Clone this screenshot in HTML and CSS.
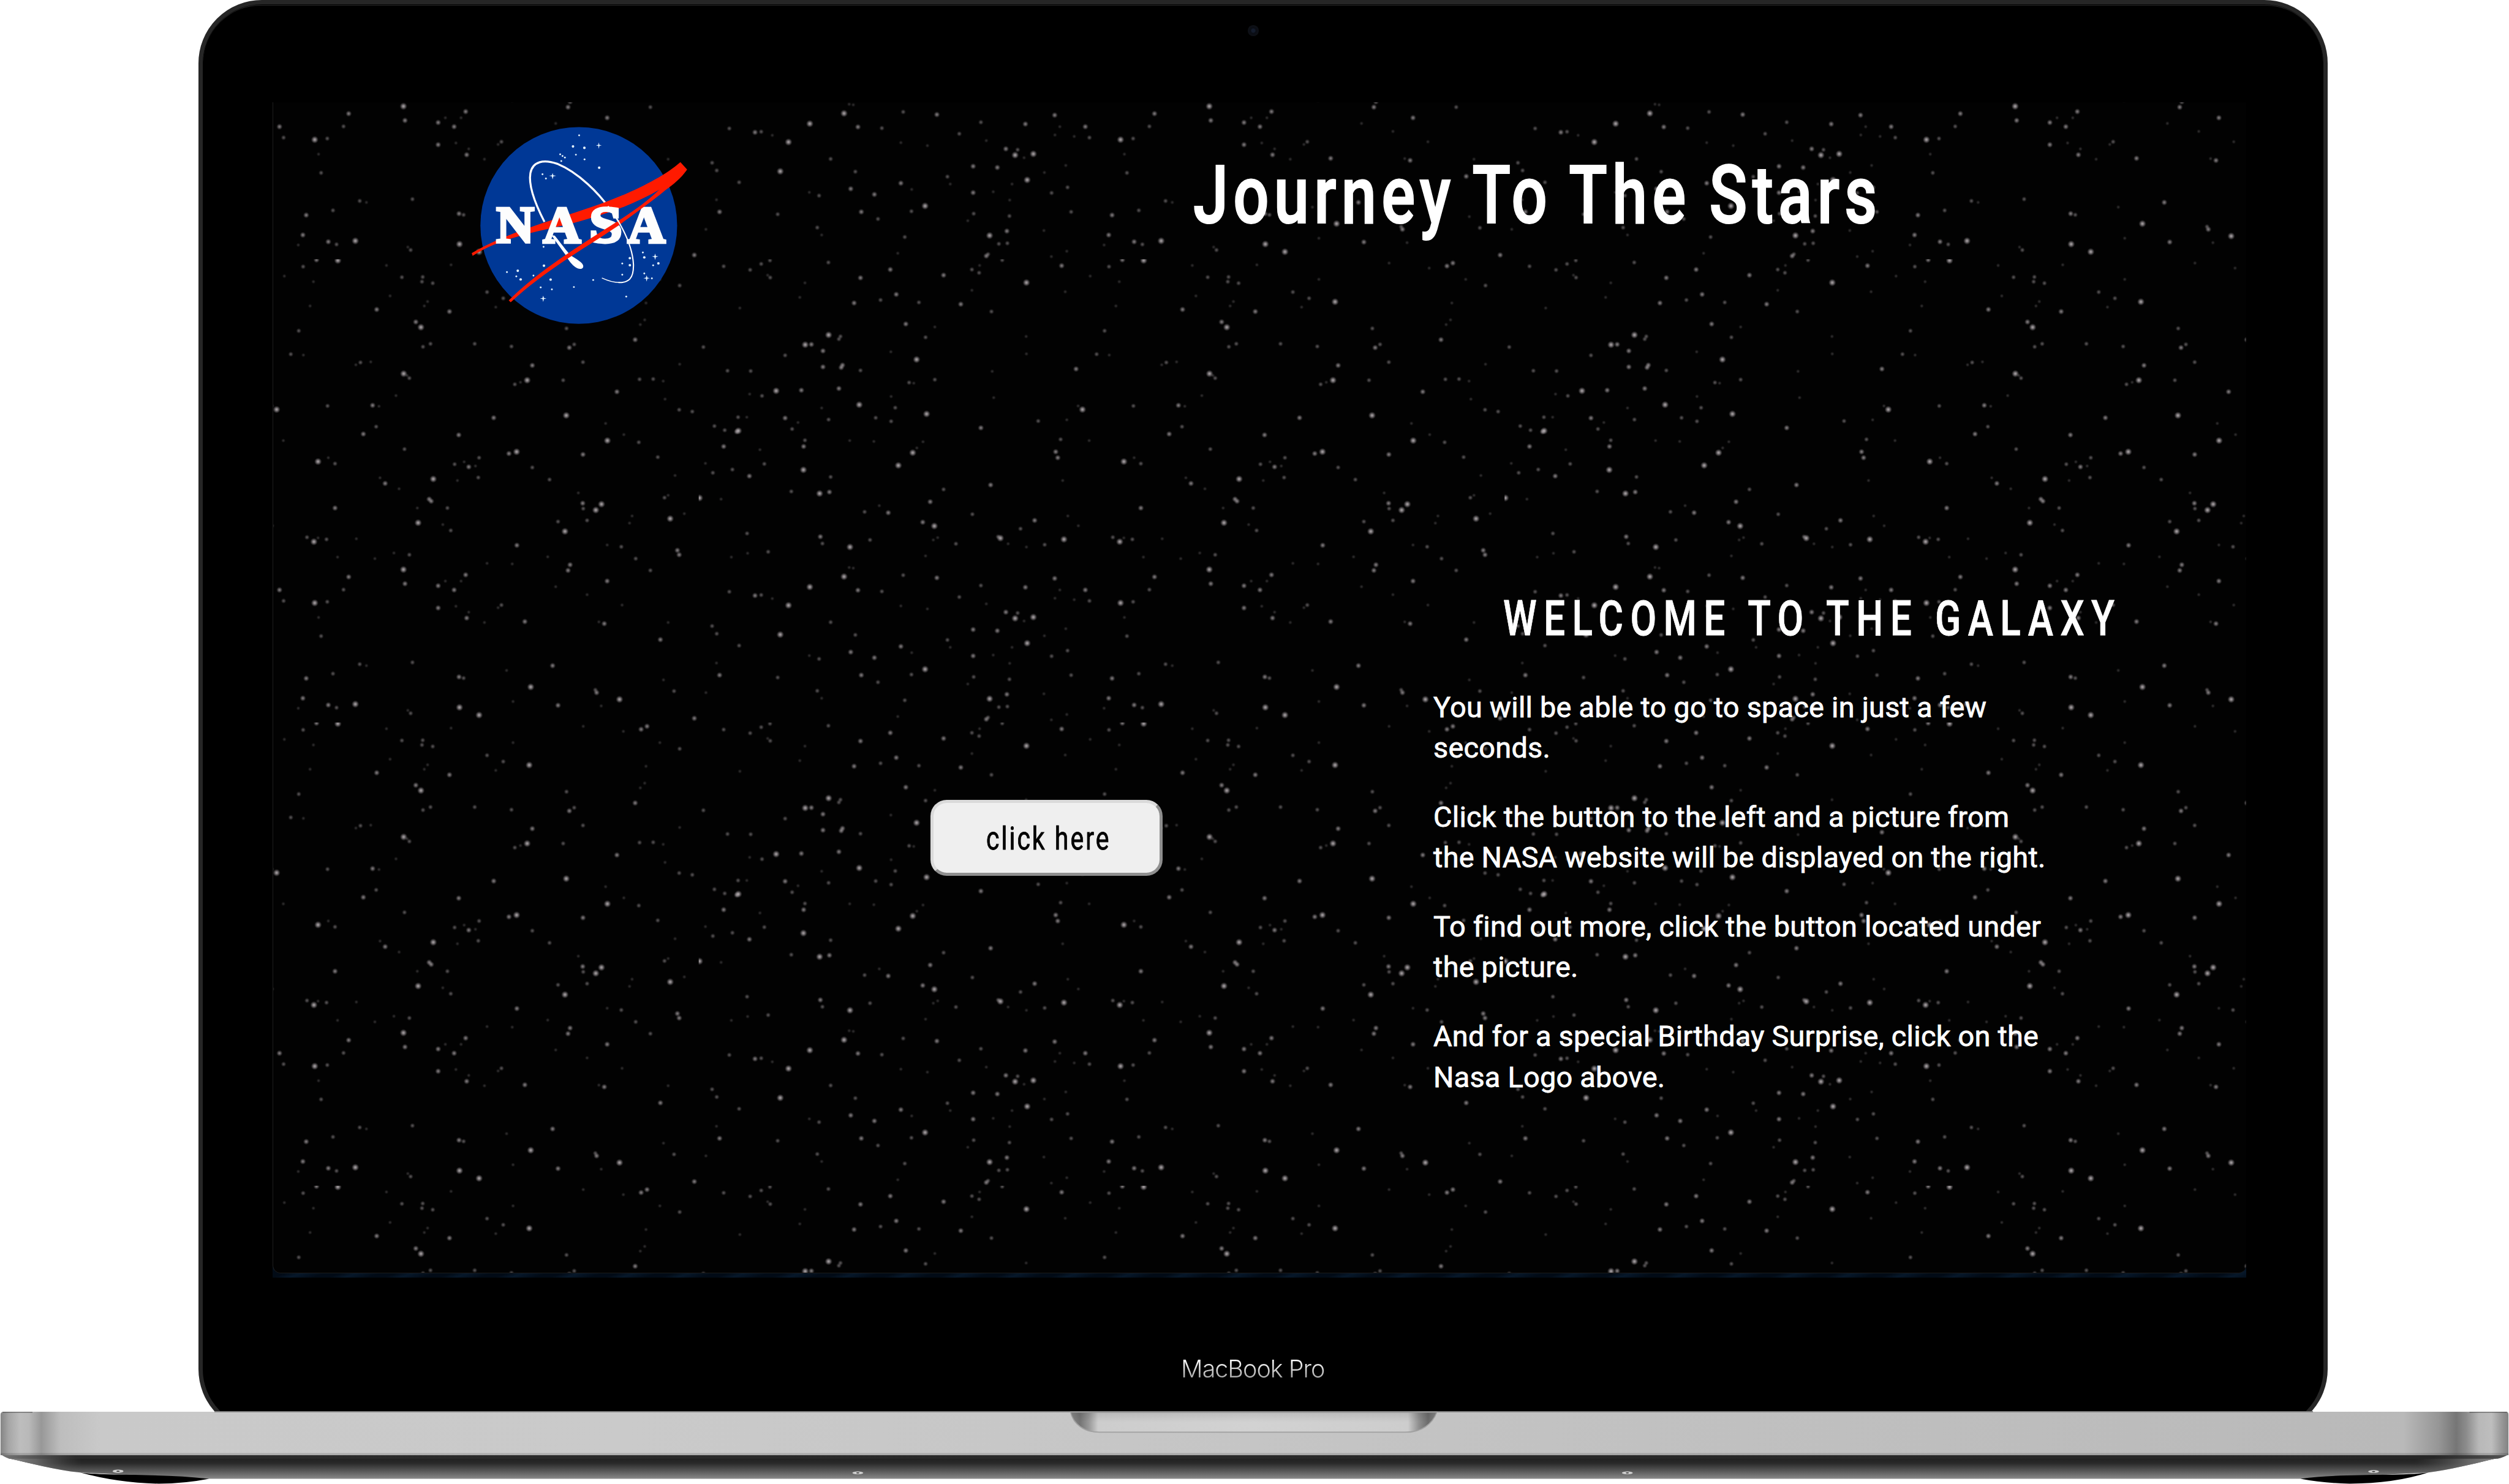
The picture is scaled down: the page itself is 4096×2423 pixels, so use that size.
FILE: index.html
```html
<!DOCTYPE html>
<html lang="en">
<head>
<meta charset="utf-8">
<title>Journey To The Stars</title>
<link rel="stylesheet" href="styles.css">
</head>
<body>
<div class="laptop">
  <div class="lid">
    <div class="bezel">
      <div class="camera"></div>
      <div class="screen">
        <svg class="sky" viewBox="0 0 3644 2163" preserveAspectRatio="none" aria-hidden="true">
          <defs>
            <radialGradient id="glow">
              <stop offset="0" stop-color="#cfc8cb"/>
              <stop offset=".35" stop-color="#b5aeb2" stop-opacity=".8"/>
              <stop offset="1" stop-color="#8a8488" stop-opacity="0"/>
            </radialGradient>
            <pattern id="stars" patternUnits="userSpaceOnUse" x="786" y="290" width="1488.5" height="856"></pattern>
          </defs>
          <rect width="3644" height="2163" fill="url(#stars)"/>
        </svg>
        <div class="page">
          <header class="header">
            <svg class="logo" viewBox="0 0 1380 1260" role="img" aria-label="NASA">
              <circle cx="685" cy="652" r="545" fill="#003896"/>
              <g class="logo-stars">
                <circle cx="687" cy="153" r="5"/><circle cx="653" cy="214" r="7"/><circle cx="716" cy="222" r="7"/>
                <circle cx="582" cy="258" r="5"/><circle cx="595" cy="267" r="5"/><circle cx="608" cy="276" r="5"/>
                <circle cx="588" cy="295" r="5"/><circle cx="669" cy="260" r="5"/><circle cx="717" cy="286" r="5"/>
                <circle cx="798" cy="332" r="7"/><circle cx="484" cy="368" r="5"/><circle cx="503" cy="392" r="5"/>
                <circle cx="490" cy="770" r="5"/><circle cx="492" cy="875" r="7"/><circle cx="287" cy="910" r="5"/>
                <circle cx="347" cy="903" r="7"/><circle cx="339" cy="934" r="5"/><circle cx="363" cy="951" r="7"/>
                <circle cx="434" cy="930" r="5"/><circle cx="529" cy="952" r="7"/><circle cx="474" cy="995" r="5"/>
                <circle cx="536" cy="1006" r="5"/><circle cx="658" cy="993" r="5"/><circle cx="765" cy="954" r="5"/>
                <circle cx="926" cy="863" r="5"/><circle cx="968" cy="833" r="7"/><circle cx="968" cy="872" r="7"/>
                <circle cx="926" cy="925" r="5"/><circle cx="1040" cy="802" r="5"/><circle cx="1048" cy="829" r="7"/>
                <circle cx="1126" cy="862" r="7"/><circle cx="1097" cy="873" r="5"/><circle cx="1048" cy="918" r="5"/>
                <circle cx="1090" cy="945" r="5"/><circle cx="948" cy="1046" r="5"/>
                <path d="M796 192l3 13 13 3-13 3-3 16-3-16-13-3 13-3z"/>
                <path d="M540 361l4 13 16 3-16 3-4 17-4-17-16-3 16-3z"/>
                <path d="M1108 808l4 13 14 3-14 3-4 16-4-16-14-3 14-3z"/>
                <path d="M1061 928l4 13 14 3-14 3-4 16-4-16-14-3 14-3z"/>
                <path d="M488 1041l4 13 14 3-14 3-4 16-4-16-14-3 14-3z"/>
              </g>
              <path class="orbit" stroke-width="11" d="M495 632C440 525 406 425 417 362C430 295 492 285 565 310C690 362 800 480 850 552"/>
              <path class="wing" d="M92 805C280 695 500 635 700 568C900 505 1130 405 1248 301L1285 342C1250 395 1200 430 1180 445L1130 455C1000 530 850 587 660 637C430 692 250 722 97 820Z"/>
              <path class="orbit-end" d="M533 706L552 708C590 755 615 790 640 818C690 848 716 866 709 884C702 898 678 894 662 880C636 857 625 838 612 815Z"/>
              <text class="logo-text" y="747"><tspan x="228">N</tspan><tspan x="487">A</tspan><tspan x="742" textLength="184" lengthAdjust="spacingAndGlyphs">S</tspan><tspan x="955">A</tspan></text>
              <path class="wing" d="M297 1067C440 925 620 805 890 635C990 572 1060 522 1130 455L1200 380L1285 342C1230 412 1120 497 905 652C700 790 500 900 308 1077Z"/>
              <path class="orbit" stroke-width="9" d="M846 546C868 572 885 596 905 630"/>
              <path class="orbit" stroke-width="7" d="M903 626C955 715 985 800 988 870C989 948 960 970 905 968"/>
              <path class="orbit" stroke-width="5" d="M910 968C875 968 845 958 813 943"/>
            </svg>
            <h1 class="title"><span>Journey To The Stars</span></h1>
          </header>
          <main class="main">
            <button class="launch" type="button"><span>click here</span></button>
            <section class="intro">
              <h2 class="welcome"><span>WELCOME TO THE GALAXY</span></h2>
              <p>You will be able to go to space in just a few<br>seconds.</p>
              <p>Click the button to the left and a picture from<br>the NASA website will be displayed on the right.</p>
              <p>To find out more, click the button located under<br>the picture.</p>
              <p>And for a special Birthday Surprise, click on the<br>Nasa Logo above.</p>
            </section>
          </main>
        </div>
      </div>
      <div class="model"><span>MacBook Pro</span></div>
    </div>
  </div>
  <svg class="base" viewBox="0 2606 4633 135" preserveAspectRatio="none" aria-hidden="true">
    <defs>
      <linearGradient id="metal" gradientUnits="userSpaceOnUse" x1="0" y1="0" x2="4633" y2="0">
        <stop offset="0" stop-color="#828282"/><stop offset=".0035" stop-color="#a6a6a6"/>
        <stop offset=".008" stop-color="#bdbdbd"/><stop offset=".0115" stop-color="#b9b9b9"/>
        <stop offset=".0165" stop-color="#989898"/><stop offset=".024" stop-color="#bdbdbd"/>
        <stop offset=".04" stop-color="#c9c9c9"/><stop offset=".25" stop-color="#cacaca"/>
        <stop offset=".5" stop-color="#c5c5c5"/><stop offset=".85" stop-color="#bcbcbc"/>
        <stop offset=".958" stop-color="#b9b9b9"/><stop offset=".972" stop-color="#969696"/>
        <stop offset=".979" stop-color="#767676"/><stop offset=".983" stop-color="#8c8c8c"/>
        <stop offset=".988" stop-color="#b8b8b8"/><stop offset=".993" stop-color="#bebebe"/>
        <stop offset=".997" stop-color="#999"/><stop offset="1" stop-color="#808080"/>
      </linearGradient>
      <linearGradient id="under" x1="0" y1="0" x2="0" y2="1">
        <stop offset="0" stop-color="#202020"/><stop offset=".25" stop-color="#2a2a2a"/>
        <stop offset=".65" stop-color="#5c5c5c"/><stop offset="1" stop-color="#8a8a8a"/>
      </linearGradient>
      <linearGradient id="edgeL" gradientUnits="userSpaceOnUse" x1="10" y1="0" x2="150" y2="0">
        <stop offset="0" stop-color="#909090"/><stop offset=".4" stop-color="#808080" stop-opacity=".7"/><stop offset="1" stop-color="#555" stop-opacity="0"/>
      </linearGradient>
      <linearGradient id="edgeR" gradientUnits="userSpaceOnUse" x1="4623" y1="0" x2="4460" y2="0">
        <stop offset="0" stop-color="#909090"/><stop offset=".4" stop-color="#808080" stop-opacity=".7"/><stop offset="1" stop-color="#555" stop-opacity="0"/>
      </linearGradient>
      <linearGradient id="strip" gradientUnits="userSpaceOnUse" x1="0" y1="0" x2="4633" y2="0">
        <stop offset="0" stop-color="#777"/><stop offset=".03" stop-color="#2b2b2b"/><stop offset=".97" stop-color="#262626"/><stop offset="1" stop-color="#555"/>
      </linearGradient>
      <linearGradient id="notch" gradientUnits="userSpaceOnUse" x1="1977" y1="0" x2="2654" y2="0">
        <stop offset="0" stop-color="#8a8a8a"/><stop offset=".025" stop-color="#747474"/><stop offset=".05" stop-color="#999"/>
        <stop offset=".075" stop-color="#cdcdcd"/><stop offset=".5" stop-color="#d2d2d2"/><stop offset=".92" stop-color="#cdcdcd"/>
        <stop offset=".95" stop-color="#8f8f8f"/><stop offset=".975" stop-color="#6c6c6c"/><stop offset="1" stop-color="#8a8a8a"/>
      </linearGradient>
      <linearGradient id="notchShade" x1="0" y1="0" x2="0" y2="1">
        <stop offset="0" stop-color="#000" stop-opacity=".1"/><stop offset=".5" stop-color="#000" stop-opacity="0"/>
      </linearGradient>
    </defs>
    <path fill="url(#under)" d="M15 2693C60 2703 100 2714 148 2719.500L383 2731H4250L4484 2719.500C4530 2713 4570 2703 4610 2693Z"/>
    <path fill="url(#edgeL)" d="M15 2693C60 2703 100 2714 148 2719.500L155 2720V2693Z"/>
    <path fill="url(#edgeR)" d="M4610 2693C4570 2703 4530 2713 4484 2719.500L4455 2721V2693Z"/>
    <path fill="url(#strip)" d="M2 2686H4632Q4624 2691 4612 2694H18Q8 2691 2 2686Z"/>
    <path fill="url(#metal)" d="M5 2607H4629Q4632 2608 4632 2613V2687.500H1V2613Q1 2608 5 2607Z"/>
    <path fill="#000" opacity=".14" d="M1 2683.500H4632V2687.500H1Z"/>
    <path fill="#4a4a4a" opacity=".7" d="M396 2606H4271V2608H396Z"/>
    <path fill="#3a3a3a" opacity=".5" d="M5 2607H60V2609H5ZM4560 2607H4629V2609H4560Z"/>
    <path fill="url(#notch)" stroke="#a0a0a0" stroke-width="2" d="M1977 2608C1982 2630 2002 2645 2030 2645H2595C2625 2645 2645 2630 2653 2608Z"/>
    <path fill="url(#notchShade)" d="M1977 2608C1982 2630 2002 2645 2030 2645H2595C2625 2645 2645 2630 2653 2608Z"/>
    <path fill="#000" d="M148 2719.500C200 2726 300 2721 386 2731Q340 2740 293 2740Q220 2739 148 2719.500Z"/>
    <path fill="#000" d="M4248 2731C4330 2720 4430 2727 4484 2719.500Q4420 2740 4339 2740Q4290 2739 4248 2731Z"/>
    <g fill="#cfcfcf">
      <ellipse cx="218" cy="2717" rx="10" ry="3"/><ellipse cx="4383" cy="2717.500" rx="10" ry="2.600"/>
      <ellipse cx="1584" cy="2720" rx="10" ry="2.600"/><ellipse cx="3005" cy="2720" rx="10" ry="2.600"/>
    </g>
    <g fill="#333">
      <ellipse cx="218" cy="2717" rx="3" ry="1"/><ellipse cx="4383" cy="2717.500" rx="3" ry="1"/>
      <ellipse cx="1584" cy="2720" rx="3" ry="1"/><ellipse cx="3005" cy="2720" rx="3" ry="1"/>
    </g>
  </svg>
</div>
<script src="stars.js"></script>
</body>
</html>
```
FILE: stars.js
```js
// One tile of the star field: x, y, brightness (1 faint - 4 bright), in tile grid units.
const left = [
  97,24,2, 200,36,2, 243,16,2, 277,4,2, 268,54,1, 278,62,2, 413,80,1, 393,129,1, 504,11,2, 629,63,3,
  604,148,3, 707,138,2, 745,35,3, 768,119,3, 856,146,2, 952,54,3, 1019,152,3, 1062,35,2, 1092,21,1, 1090,46,2,
  1062,105,1, 1180,3,2, 1138,177,2, 1274,79,4, 1411,22,3, 1522,57,1, 1425,110,1, 160,165,1, 805,219,3, 918,229,1,
  882,264,2, 505,256,4, 551,261,2, 545,270,2, 414,289,4, 438,288,3, 483,310,3, 336,325,2, 18,297,2, 747,313,1,
  847,339,4, 1273,261,1, 1274,320,1, 1547,321,2, 112,377,2, 202,378,2, 483,364,3, 559,358,3, 554,366,3, 629,376,2,
  818,417,2, 836,419,1, 918,407,2, 1141,379,1, 1467,371,3, 301,445,4, 246,462,2, 198,456,1, 399,443,3, 545,437,3,
  624,492,4, 478,503,1, 748,464,1, 764,502,2, 886,523,4, 1147,468,1, 1475,496,1, 1492,508,4, 1431,543,1, 1320,547,2,
  153,534,2, 187,534,1, 336,537,3, 386,552,1, 505,542,2, 688,536,2, 748,548,2, 61,564,2, 101,578,2, 148,583,3,
  154,580,4, 363,574,2, 1097,570,3, 1407,609,2, 1518,613,1, 413,612,2, 408,633,3, 587,613,1, 681,616,1, 872,617,1,
  848,638,1, 832,654,4, 776,697,4, 1388,651,3, 1396,671,3, 97,633,3, 238,644,1, 26,690,1, 255,692,2, 55,722,2,
  131,711,2, 197,733,3, 407,712,4, 513,736,2, 360,785,2, 470,792,4, 508,787,3, 1415,748,1, 1135,763,3, 952,778,2,
  3,807,4, 87,811,1, 900,820,3, 702,833,1, 645,854,2, 737,857,3, 1064,862,2, 871,889,3, 916,902,4, 1306,883,3,
  1251,911,2, 1435,868,1, 188,927,2, 473,938,3, 481,961,2, 588,973,4, 666,949,2, 912,949,1, 929,941,1, 1000,962,2,
  1164,938,2, 1173,943,4, 1203,962,1, 1274,973,1, 1345,965,2, 1420,947,4, 1476,901,1, 127,1007,1, 190,994,1, 270,989,2,
  882,1003,1, 585,1042,1, 601,1044,1, 565,1073,4, 795,1068,2, 926,1077,3, 1384,1079,3, 432,1108,4, 119,1124,2, 219,1137,3,
  243,1135,2, 286,1147,1, 349,1170,4, 619,1119,3, 712,1123,2, 1097,1103,2, 1270,1109,3, 1404,1118,1, 1503,1118,3, 1519,1155,2,
  1013,1142,2, 1118,1165,1, 786,1172,1, 889,1182,1, 1194,1193,3, 1240,1196,2, 1230,1214,4, 1265,1223,1, 1301,1210,4, 1460,1151,1,
  1385,1146,1, 513,1227,2, 52,1240,2, 70,1266,2, 317,1269,4, 609,1270,2, 1067,1252,3, 1161,1256,3, 1427,1249,1, 1344,1273,1,
  967,1287,2, 978,1312,1, 1277,1298,4, 157,1306,2, 786,1309,3, 828,1330,1, 591,1328,3, 683,1347,3, 468,1351,2, 430,1340,1,
  1067,1341,3, 1145,1338,1, 1218,1312,1, 1372,1342,2, 1434,1323,2, 1209,1366,1, 1448,1406,2, 880,1386,4, 827,1404,2, 632,1406,3,
  697,1430,2, 81,1406,3, 307,1414,2, 69,1365,1, 461,1459,2, 478,1484,1, 801,1491,2, 1069,1412,2, 1046,1436,1, 1208,1420,2,
  1198,1471,3, 1131,1486,4, 1167,1514,2, 1200,1512,2, 1118,1555,3, 1125,1549,2, 1342,1469,1, 1431,1539,1, 1371,1557,1, 28,1465,1,
  774,1546,1
];
const right = [
  27,25,2, 79,2,3, 162,4,4, 67,76,1, 351,21,1, 54,158,1, 411,61,2, 365,124,1, 492,60,2, 489,76,2,
  531,81,2, 602,19,1, 511,143,1, 498,158,1, 313,170,3, 596,177,3, 742,111,2, 805,132,2, 776,162,1, 843,68,1,
  906,144,4, 1116,13,1, 1272,30,1, 1341,23,3, 1364,13,3, 1414,68,1, 1491,89,2, 1360,148,1, 1355,205,1, 1338,221,1,
  465,212,3, 485,230,4, 10,242,2, 28,324,1, 522,286,2, 493,296,2, 694,286,2, 837,295,2, 1051,234,2, 1062,299,3,
  1081,288,2, 1318,272,3, 232,357,1, 250,349,2, 290,347,1, 418,387,4, 440,402,2, 431,393,1, 388,461,1, 918,359,3,
  1115,348,2, 1491,355,1, 850,423,2, 872,416,1, 898,409,4, 1038,409,2, 1335,406,2, 1388,405,2, 1427,412,1, 1247,448,3,
  1434,473,1, 122,496,2, 297,494,3, 322,497,1, 1489,509,2, 1540,515,2, 1050,528,4, 768,536,3, 1203,555,1, 311,566,2,
  261,591,3, 632,594,3, 1274,593,1, 1332,619,2, 1210,613,4, 421,642,2, 85,684,4, 125,671,1, 151,691,2, 616,693,2,
  653,685,1, 671,702,3, 697,699,1, 711,671,2, 827,657,3, 857,651,4, 1115,660,3, 918,704,2, 1406,669,2, 708,738,2,
  533,743,4, 627,748,1, 985,745,2, 346,758,3, 326,739,1, 400,776,1, 1473,731,1, 517,811,3, 525,818,3, 588,841,2,
  471,841,1, 151,841,3, 1097,790,1, 1114,825,3, 1116,843,2, 1187,828,4, 1165,848,4, 1131,883,2, 1446,798,1, 1432,806,2,
  1454,877,4, 1509,860,1, 1306,868,1, 1296,892,1, 1018,887,2, 1045,920,4, 474,891,4, 570,897,1, 601,917,2, 42,940,2,
  69,955,4, 85,942,1, 118,947,2, 234,945,1, 380,993,1, 440,999,2, 858,967,3, 1209,966,1, 1264,972,2, 1482,984,3,
  1489,999,3, 161,1007,1, 306,1012,1, 978,1006,1, 1320,1012,2, 742,1028,1, 840,1030,1, 1065,1033,3, 1057,1052,3, 1377,1052,2,
  417,1049,4, 423,1097,3, 204,1074,3, 184,1117,2, 659,1067,3, 641,1088,1, 580,1088,1, 552,1104,3, 614,1118,3, 1009,1107,1,
  1209,1088,3, 1131,1134,1, 72,1162,4, 121,1158,2, 552,1179,3, 621,1173,1, 671,1193,1, 663,1213,3, 732,1228,1, 798,1169,2,
  785,1178,1, 1267,1169,1, 87,1211,1, 889,1225,3, 1177,1226,1, 1198,1232,3, 1446,1228,1, 97,1274,2, 1416,1286,3, 247,1369,2,
  273,1374,1, 143,1401,2, 39,1417,3, 452,1363,2, 633,1412,3, 651,1416,2, 818,1390,1, 997,1374,3, 912,1446,4, 1428,1422,1,
  1469,1460,2, 1163,1456,2, 1168,1465,3, 1257,1488,4, 1186,1510,1, 1018,1508,3, 843,1495,1, 26,1484,3, 8,1518,1, 125,1507,3,
  157,1516,2, 230,1504,4, 434,1525,1, 445,1535,2, 635,1515,4, 711,1541,4, 1548,1552,3
];
const scaleX = 0.4751;
const scaleY = 0.5466;
const looks = { 1: [4, 0.25], 2: [5, 0.45], 3: [5.8, 0.65], 4: [7, 0.85] };
const pattern = document.getElementById('stars');
const NS = 'http://www.w3.org/2000/svg';

function plant(list, shift) {
  for (let i = 0; i < list.length; i += 3) {
    const [radius, opacity] = looks[list[i + 2]];
    const star = document.createElementNS(NS, 'circle');
    star.setAttribute('cx', ((list[i] + shift) * scaleX).toFixed(1));
    star.setAttribute('cy', (list[i + 1] * scaleY).toFixed(1));
    star.setAttribute('r', radius);
    star.setAttribute('opacity', opacity);
    star.setAttribute('fill', 'url(#glow)');
    pattern.appendChild(star);
  }
}

plant(left, 0);
plant(right, 1568);
```
FILE: styles.css
```css
/* 1rem is 100 design units; the design is 4633 units wide */
html {
  font-size: calc(100vw / 46.33);
}

*,
*::before {
  box-sizing: border-box;
}

body {
  margin: 0;
  background: #fff;
  font-family: Roboto, "Liberation Sans", sans-serif;
  overflow: hidden;
}

.laptop {
  width: 46.33rem;
  height: 27.41rem;
  display: flex;
  flex-direction: column;
}

.lid {
  height: 26.06rem;
  flex: none;
  padding-left: 3.67rem;
  overflow: hidden;
}

.bezel {
  position: relative;
  width: 39.31rem;
  height: 26.46rem;
  border: 0.09rem solid #262626;
  border-radius: 1.17rem;
  background: #000;
  padding: 1.81rem 0 0 1.285rem;
}

.bezel::before {
  content: "";
  position: absolute;
  inset: 0.015rem 0.01rem;
  border-top: 0.014rem solid #2a2a2a;
  border-radius: 1.06rem;
}

.camera {
  position: absolute;
  left: 19.29rem;
  top: 0.39rem;
  width: 0.2rem;
  height: 0.2rem;
  border-radius: 50%;
  background: radial-gradient(circle, #141c2c 0 20%, #0a0d14 35%, #121419 100%);
}

.screen {
  display: grid;
  width: 36.44rem;
  height: 21.71rem;
  background: repeating-linear-gradient(160deg, #020b16 0 0.1rem, #07182a 0.2rem, #020b16 0.35rem);
}

.sky,
.page {
  grid-area: 1 / 1;
  width: 36.44rem;
  height: 21.63rem;
}

.sky {
  background: #020202;
  border-left: 0.012rem solid #1e1e1e;
  border-bottom: 0.012rem solid #1a1a1a;
  border-radius: 0 0 0.15rem 0.15rem;
}

.header {
  display: flex;
  gap: 9.03rem;
  height: 4.3rem;
  padding: 0.1rem 0 0 3.365rem;
}

.logo {
  flex: none;
  width: 4.6rem;
  height: 4.2rem;
}

.logo-stars {
  fill: #e4f4ff;
}

.orbit {
  fill: none;
  stroke: #fff;
}

.orbit-end {
  fill: #fff;
}

.wing {
  fill: #ff1a00;
}

.logo-text {
  font: bold 290px "Liberation Serif", serif;
  fill: #fdfdfd;
  stroke: #fdfdfd;
  stroke-width: 15px;
}

.title,
.welcome {
  margin: 0;
  color: #fff;
  white-space: nowrap;
  font-weight: 500;
}

.title span,
.welcome span,
.launch span {
  display: inline-block;
  transform-origin: 0 50%;
}

.title {
  padding-top: 0.87rem;
  font-size: 1.49rem;
  line-height: 1.5rem;
  -webkit-text-stroke: 0.025rem #fff;
}

.title span {
  transform: scaleX(0.78);
  letter-spacing: 0.08em;
  word-spacing: -0.04em;
}

.main {
  display: flex;
  align-items: flex-start;
  gap: 5rem;
  padding-left: 12.145rem;
}

.launch {
  flex: none;
  width: 4.29rem;
  height: 1.41rem;
  margin-top: 8.58rem;
  padding: 0.03rem 0 0 0.97rem;
  border: 0.06rem solid;
  border-color: #dadada #8f8f8f #8f8f8f #dadada;
  border-radius: 0.3rem;
  background: #efefef;
  color: #000;
  font: 400 0.58rem/1.2 Roboto, sans-serif;
  text-align: left;
  white-space: nowrap;
  -webkit-text-stroke: 0.01rem #000;
}

.launch span {
  transform: scaleX(0.8);
  letter-spacing: 0.073em;
}

.intro {
  padding-top: 4.68rem;
  color: #fff;
  font-size: 0.53rem;
  line-height: 0.75rem;
  letter-spacing: 0.0052em;
  white-space: nowrap;
  -webkit-text-stroke: 0.009rem #fff;
}

.intro p {
  margin: 0 0 0.526rem;
}

.welcome {
  padding-left: 1.29rem;
  margin-bottom: 0.72rem;
  font-size: 0.9rem;
  line-height: 1.1rem;
}

.welcome span {
  transform: scaleX(0.78);
  letter-spacing: 0.184em;
}

.model {
  width: 36.2rem;
  padding-top: 1.39rem;
  font: 300 0.447rem/0.6rem Inter, sans-serif;
  letter-spacing: -0.026em;
  text-align: center;
}

.model span {
  color: transparent;
  background: linear-gradient(#fff 20%, #a8a8a8 80%);
  background-clip: text;
  -webkit-background-clip: text;
}

.base {
  display: block;
  flex: none;
  width: 46.33rem;
  height: 1.35rem;
}
```
